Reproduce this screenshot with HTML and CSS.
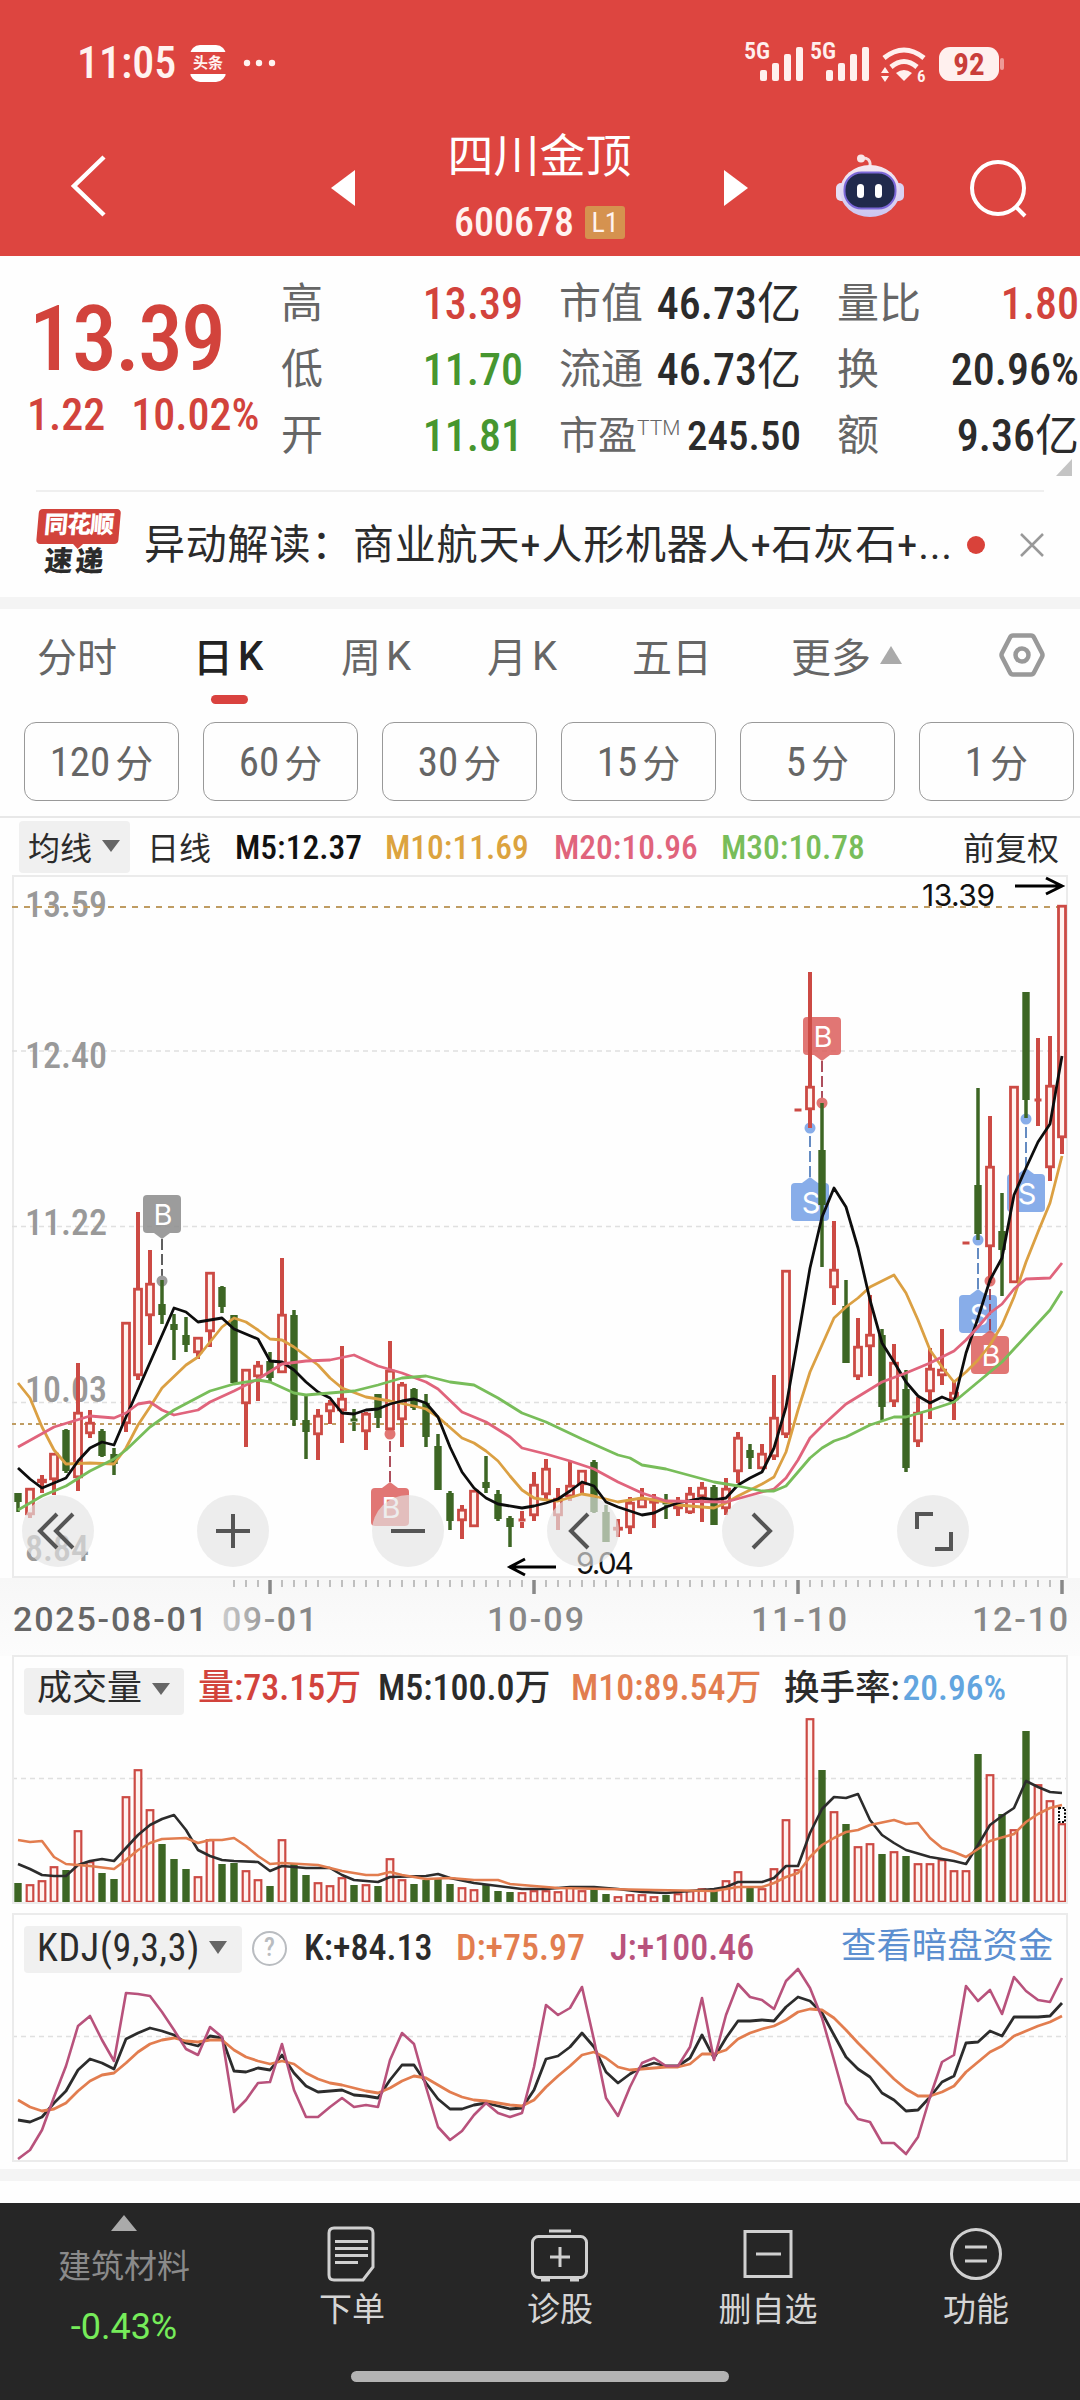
FILE: index.html
```html
<!DOCTYPE html>
<html lang="zh-CN">
<head>
  <meta charset="utf-8">
  <title>四川金顶 600678</title>
  <link rel="stylesheet" href="styles.css">
</head>
<body>
  <header class="header">
    <div class="status">
      <span class="clock">11:05</span>
      <span class="app-badge"><b>头条</b></span>
      <svg class="dots" width="34" height="8"><circle cx="4" cy="4" r="3.2"/><circle cx="16" cy="4" r="3.2"/><circle cx="29" cy="4" r="3.2"/></svg>
      <svg class="signal" width="264" height="44" viewBox="742 40 264 44">
        <text x="744" y="58">5G</text>
        <rect x="760" y="69" width="7" height="11" rx="2"/><rect x="772" y="62" width="7" height="18" rx="2"/><rect x="784" y="53" width="7" height="27" rx="2"/><rect x="796" y="46" width="7" height="34" rx="2"/>
        <text x="810" y="58">5G</text>
        <rect x="826" y="69" width="7" height="11" rx="2"/><rect x="838" y="62" width="7" height="18" rx="2"/><rect x="850" y="53" width="7" height="27" rx="2"/><rect x="862" y="46" width="7" height="34" rx="2"/>
        <path class="wave" d="M884 57Q904 41 924 57M891 66Q904 55 917 66"/>
        <path d="M896 72Q904 66 912 72L904 80ZM881 72l4-6 4 6zM881 75l4 6 4-6z"/>
        <text class="six" x="917" y="81">6</text>
        <rect x="939" y="46" width="60" height="34" rx="11"/><rect x="1000" y="57" width="4" height="12" rx="2" opacity=".5"/>
        <text class="level" x="969" y="74" text-anchor="middle">92</text>
      </svg>
    </div>
    <div class="nav">
      <svg class="back" width="40" height="64" viewBox="0 0 40 64"><path d="M36 3L6 32L36 61"/></svg>
      <svg class="prev" width="24" height="36" viewBox="0 0 24 36"><path d="M24 0v36L0 18z"/></svg>
      <div class="stock">
        <h1>四川金顶</h1>
        <div class="code">600678<span class="level-tag">L1</span></div>
      </div>
      <svg class="next" width="24" height="36" viewBox="0 0 24 36"><path d="M0 0v36l24-18z"/></svg>
      <svg class="robot" width="68" height="64" viewBox="0 0 68 64">
        <defs>
          <linearGradient id="shell" x1="0" y1="0" x2="0" y2="1"><stop offset="0" stop-color="#f6e9f0"/><stop offset="1" stop-color="#cbc6f2"/></linearGradient>
        </defs>
        <path d="M25 4Q35 3 34 12" fill="none" stroke="#f6dde0" stroke-width="3"/><circle cx="25" cy="4.5" r="4" fill="#f8e6e8"/>
        <rect x="0" y="29" width="12" height="18" rx="5" fill="#e5dff5"/><rect x="56" y="29" width="12" height="18" rx="5" fill="#d9d2f2"/>
        <ellipse cx="34" cy="37" rx="30" ry="26" fill="url(#shell)"/>
        <rect x="8.500" y="18.500" width="51" height="36" rx="17" fill="#202a4c" stroke="#7b68d8" stroke-width="2"/>
        <rect x="21" y="30" width="7" height="14" rx="3.500" fill="#fff"/><rect x="39" y="30" width="7" height="14" rx="3.500" fill="#fff"/>
      </svg>
      <svg class="search" width="58" height="60" viewBox="0 0 58 60"><circle cx="28" cy="28" r="26"/><path d="M46 47l9 9"/></svg>
    </div>
  </header>

  <section class="quote">
    <div class="last">
      <div class="price">13.39</div>
      <div class="change"><span>1.22</span><span>10.02%</span></div>
    </div>
    <dl class="facts">
      <div><dt>高</dt><dd class="up">13.39</dd></div>
      <div><dt>低</dt><dd class="down">11.70</dd></div>
      <div><dt>开</dt><dd class="down">11.81</dd></div>
    </dl>
    <dl class="facts">
      <div><dt>市值</dt><dd>46.73<span>亿</span></dd></div>
      <div><dt>流通</dt><dd>46.73<span>亿</span></dd></div>
      <div class="small"><dt>市盈<sup>TTM</sup></dt><dd>245.50</dd></div>
    </dl>
    <dl class="facts">
      <div><dt>量比</dt><dd class="up">1.80</dd></div>
      <div><dt>换</dt><dd>20.96%</dd></div>
      <div><dt>额</dt><dd>9.36<span>亿</span></dd></div>
    </dl>
    <svg class="corner" width="16" height="17"><path d="M16 0v17H0z" fill="#c4c4c4"/></svg>
  </section>

  <section class="news">
    <div class="news-logo"><span class="logo-top">同花顺</span><span class="logo-bottom">速递</span></div>
    <p>异动解读：商业航天+人形机器人+石灰石+...</p>
    <i class="unread"></i>
    <svg class="close" width="24" height="24"><path d="M1 1l22 22M23 1L1 23"/></svg>
  </section>

  <nav class="tabs">
    <a>分时</a>
    <a class="active">日<span>K</span></a>
    <a>周<span>K</span></a>
    <a>月<span>K</span></a>
    <a>五日</a>
    <a class="more">更多<svg width="22" height="18"><path d="M11 0l11 18H0z" fill="#aaa"/></svg></a>
    <svg class="setting" width="46" height="44" viewBox="0 0 46 44"><path d="M14 2.500h18q2 0 3 2l8 15.500q1 2 0 4l-8 15.500q-1 2-3 2H14q-2 0-3-2L3 24q-1-2 0-4l8-15.500q1-2 3-2z"/><circle cx="23" cy="22" r="6.500"/></svg>
  </nav>
  <div class="periods">
    <button>120<span>分</span></button><button>60<span>分</span></button><button>30<span>分</span></button><button>15<span>分</span></button><button>5<span>分</span></button><button>1<span>分</span></button>
  </div>

  <div class="ma-bar">
    <span class="pill">均线<svg width="18" height="12"><path d="M0 0h18L9 12z"/></svg></span>
    <span class="day">日线</span>
    <span class="m5">M5:12.37</span>
    <span class="m10">M10:11.69</span>
    <span class="m20">M20:10.96</span>
    <span class="m30">M30:10.78</span>
    <span class="adjust">前复权</span>
  </div>

  <section class="kline">
    <svg id="candles" width="1080" height="702" viewBox="0 0 1080 702"></svg>
    <div class="controls">
      <button><svg viewBox="0 0 72 72"><path d="M35 19L18 36L35 53M51 19L34 36L51 53"/></svg></button>
      <button><svg viewBox="0 0 72 72"><path d="M36 19v34M19 36h34"/></svg></button>
      <button><svg viewBox="0 0 72 72"><path d="M19 36h34"/></svg></button>
      <button><svg viewBox="0 0 72 72"><path d="M41 19L24 36L41 53"/></svg></button>
      <button><svg viewBox="0 0 72 72"><path d="M31 19L48 36L31 53"/></svg></button>
      <button><svg viewBox="0 0 72 72"><path d="M20 34V19h16M54 37v17H38"/></svg></button>
    </div>
    <svg id="averages" width="1080" height="702" viewBox="0 0 1080 702"></svg>
  </section>
  <svg id="timeline" width="1080" height="78" viewBox="0 0 1080 78"></svg>

  <section class="panel">
    <div class="panel-head vol-head">
      <span class="pill">成交量<svg width="18" height="12"><path d="M0 0h18L9 12z"/></svg></span>
      <span class="up">量:73.15万</span>
      <span>M5:100.0万</span>
      <span class="orange">M10:89.54万</span>
      <span>换手率:<em>20.96%</em></span>
    </div>
    <svg id="volume" width="1080" height="189" viewBox="0 58 1080 189"></svg>
  </section>

  <section class="panel">
    <div class="panel-head kdj-head">
      <span class="pill">KDJ(9,3,3)<svg width="18" height="13"><path d="M0 0h18L9 13z"/></svg></span>
      <i class="help">?</i>
      <span>K:+84.13</span>
      <span class="orange">D:+75.97</span>
      <span class="purple">J:+100.46</span>
      <a>查看暗盘资金</a>
    </div>
    <svg id="kdj" width="1080" height="189" viewBox="0 58 1080 189"></svg>
  </section>
  <div class="gap"></div>

  <footer class="toolbar">
    <div class="sector">
      <svg width="26" height="16"><path d="M13 0l13 16H0z" fill="#aaa"/></svg>
      <span>建筑材料</span>
      <b>-0.43%</b>
    </div>
    <div class="tool">
      <svg width="60" height="60" viewBox="0 0 60 60"><path d="M12 4h34q5 0 5 5v34l-10 13H12q-5 0-5-5V9q0-5 5-5z"/><path d="M13 17.500h33M13 24.500h33M13 31.500h33M13 38.500h23"/></svg>
      <span>下单</span>
    </div>
    <div class="tool">
      <svg width="60" height="60" viewBox="0 0 60 60"><rect x="2.500" y="12.500" width="54" height="41" rx="6"/><path d="M19 7h22M20 33h20M30 23v20M11 56h9M40 56h9"/></svg>
      <span>诊股</span>
    </div>
    <div class="tool">
      <svg width="60" height="60" viewBox="0 0 60 60"><path d="M7 7.500h46v45H7zM18 30h25"/></svg>
      <span>删自选</span>
    </div>
    <div class="tool">
      <svg width="60" height="60" viewBox="0 0 60 60"><circle cx="30" cy="30" r="24.500"/><path d="M19 23h22M19 37h22"/></svg>
      <span>功能</span>
    </div>
    <i class="home"></i>
  </footer>

  <script src="chart.js"></script>
</body>
</html>
```
FILE: styles.css
```css
* {
  box-sizing: border-box;
}

body {
  margin: 0;
  width: 1080px;
  height: 2400px;
  background: #fefefe;
  color: #2b2b2b;
  font-family: "Roboto Condensed", Roboto, "Noto Sans CJK SC", sans-serif;
  overflow: hidden;
}

svg {
  display: block;
  overflow: visible;
}

button {
  padding: 0;
  border: 0;
  font-family: inherit;
}

.up { color: #d2433c; }
.down { color: #46962f; }
.orange { color: #e27d4f; }
.purple { color: #b8527c; }

/* header */
.header {
  height: 256px;
  background: #dd4540;
  color: #fff3f0;
}

.status {
  display: flex;
  align-items: center;
  height: 126px;
  padding: 0 74px 0 77px;
}

.clock {
  width: 113px;
  font-size: 44px;
  font-weight: 500;
}

.app-badge {
  display: flex;
  align-items: center;
  width: 36px;
  height: 37px;
  border-radius: 10px;
  background: #fff;
}

.app-badge b {
  width: 36px;
  background: #dd4540;
  font-size: 15px;
  line-height: 22px;
  text-align: center;
}

.dots {
  margin-left: 17px;
  fill: #fff3f0;
}

.signal {
  margin-left: auto;
  fill: #fff0ee;
  font-size: 24px;
  font-weight: 600;
}

.signal .wave {
  fill: none;
  stroke: #fff0ee;
  stroke-width: 5;
}

.signal .six { font-size: 17px; }
.signal .level { fill: #c93e3a; font-size: 31px; font-weight: 700; }

.nav {
  display: flex;
  align-items: flex-start;
  height: 130px;
  padding-left: 68px;
  fill: #fff;
}

.back {
  margin-top: 28px;
  fill: none;
  stroke: #fff;
  stroke-width: 4.5;
}

.prev { margin: 44px 0 0 223px; }
.next { margin-top: 44px; }

.stock {
  width: 369px;
  text-align: center;
}

.stock h1 {
  margin: 0;
  font-size: 46px;
  font-weight: 400;
  line-height: 60px;
  color: #fff;
}

.code {
  display: flex;
  justify-content: center;
  align-items: center;
  gap: 11px;
  height: 72px;
  font-size: 40px;
  font-weight: 500;
}

.level-tag {
  width: 40px;
  background: #d5924f;
  border-radius: 3px;
  font-size: 28px;
  font-weight: 400;
  line-height: 33px;
}

.robot { margin: 28px 0 0 88px; }

.search {
  margin: 34px 0 0 66px;
  fill: none;
  stroke: #fff;
  stroke-width: 4;
}

/* quote */
.quote {
  position: relative;
  display: flex;
  height: 234px;
  padding-top: 15px;
}

.last {
  flex: none;
  width: 281px;
  padding-top: 19px;
  color: #d2433c;
}

.price {
  padding-left: 29px;
  font-size: 90px;
  font-weight: 500;
  line-height: 100px;
  letter-spacing: -2px;
}

.change {
  display: flex;
  gap: 26px;
  padding-left: 27px;
  font-size: 44px;
  font-weight: 500;
  line-height: 50px;
}

.facts {
  flex: none;
  width: 242px;
  margin: 0 36px 0 0;
}

.facts div {
  display: flex;
  justify-content: space-between;
  align-items: center;
  height: 66px;
  font-size: 44px;
  white-space: nowrap;
}

.facts dt {
  color: #666;
  font-size: 42px;
  line-height: 60px;
}

.facts dd {
  margin: 0;
  font-weight: 500;
  line-height: 54px;
}

.facts dd span { font-weight: 400; }
.facts .small { font-size: 41px; }
.facts .small dt { font-size: 39px; }

.facts sup {
  display: inline-block;
  font-family: Roboto, sans-serif;
  font-size: 21px;
  font-weight: 300;
  line-height: 20px;
}

.corner {
  position: absolute;
  right: 8px;
  bottom: 14px;
}

.news {
  display: flex;
  align-items: center;
  height: 107px;
  margin-left: 36px;
  margin-right: 36px;
  border-top: 2px solid #efefef;
}

.news-logo {
  display: flex;
  flex-direction: column;
  width: 82px;
  transform: skewX(-5deg);
  text-align: center;
  font-weight: 900;
}

.logo-top {
  position: relative;
  height: 35px;
  border-radius: 4px;
  background: #d2433c;
  color: #fff;
  font-size: 24px;
  line-height: 33px;
  letter-spacing: -1px;
}

.logo-top::after {
  content: "";
  position: absolute;
  left: 37px;
  top: 35px;
  border: 5px solid transparent;
  border-top-color: #d2433c;
}

.logo-bottom {
  font-size: 28px;
  line-height: 36px;
  letter-spacing: 3px;
}

.news p {
  margin: 0 0 0 26px;
  padding-bottom: 7px;
  width: 823px;
  font-size: 41px;
  letter-spacing: 0.8px;
  white-space: nowrap;
}

.unread {
  width: 18px;
  height: 18px;
  border-radius: 50%;
  background: #d9423a;
}

.close {
  margin-left: 35px;
  stroke: #999;
  stroke-width: 2.5;
}

/* tabs */
.tabs {
  display: grid;
  grid-template-columns: 156px 148px 146px 145px 159px 208px 46px;
  align-items: center;
  height: 125px;
  padding: 0 0 21px 37px;
  border-top: 12px solid #f4f4f4;
  color: #666;
  font-size: 40px;
}

.tabs a {
  position: relative;
  display: flex;
  align-items: center;
}

.tabs span {
  margin-left: 5px;
  padding-top: 2px;
  font-family: Roboto, sans-serif;
}

.tabs .active {
  color: #222;
  font-weight: 500;
}

.tabs .active::after {
  content: "";
  position: absolute;
  left: 18px;
  top: 69px;
  width: 37px;
  height: 9px;
  border-radius: 5px;
  background: #d9423f;
}

.more { gap: 9px; }

.setting {
  fill: none;
  stroke: #999;
  stroke-width: 4.5;
}

.periods {
  display: flex;
  gap: 24px;
  height: 96px;
  padding-left: 24px;
  border-bottom: 2px solid #e8e8e8;
}

.periods button {
  flex: none;
  display: flex;
  justify-content: center;
  align-items: center;
  gap: 5px;
  width: 155px;
  height: 79px;
  border: 1.5px solid #999;
  border-radius: 12px;
  background: #fefefe;
  color: #666;
  font-size: 41px;
}

.periods span {
  padding-bottom: 2px;
  font-size: 38px;
}

.ma-bar {
  display: grid;
  grid-template-columns: 128px 88px 150px 169px 167px 242px auto;
  align-items: center;
  height: 58px;
  padding-left: 19px;
  font-size: 33.5px;
  font-weight: 500;
}

.pill {
  display: flex;
  align-items: center;
  gap: 10px;
  background: #f0f0f0;
  border-radius: 4px;
  fill: #666;
  font-weight: 400;
}

.ma-bar .pill {
  width: 111px;
  height: 52px;
  padding-left: 9px;
  padding-bottom: 3px;
  font-size: 32px;
}

.day,
.adjust {
  padding-bottom: 3px;
  font-size: 32px;
  font-weight: 400;
}

.m5 { color: #111; }
.m10 { color: #dca33f; }
.m20 { color: #e0647c; }
.m30 { color: #78bd5a; }

/* charts */
.kline {
  position: relative;
  height: 702px;
}

#averages {
  position: absolute;
  left: 0;
  top: 0;
}

.controls {
  position: absolute;
  left: 22px;
  top: 619px;
  display: flex;
  gap: 103px;
}

.controls button {
  width: 72px;
  height: 72px;
  border-radius: 50%;
  background: rgba(228, 228, 228, 0.66);
}

.controls path {
  fill: none;
  stroke: #555;
  stroke-width: 4;
}

.frame { fill: none; stroke: #ebebeb; stroke-width: 2; }
.grid { stroke: #e0e0e0; stroke-width: 1.5; stroke-dasharray: 5 4; }
.limit { stroke: #bf9c62; stroke-width: 2; stroke-dasharray: 6 6; }
.limit.close-line { stroke-dasharray: 4 4; }
.axis { fill: #999; font-size: 36px; font-weight: 500; }
.extreme { fill: #111; font-family: Inter, sans-serif; font-size: 30px; }
.arrow { fill: none; stroke: #000; stroke-width: 3; }
.marker-text { fill: #fff; font-family: Inter, sans-serif; font-size: 29px; text-anchor: middle; }
.rise { fill: #fff3f0; stroke: #cc4a44; stroke-width: 2.8; }
.rise-wick { stroke: #cc4a44; stroke-width: 4; }
.fall { fill: #3d6624; stroke: none; }
.fall-wick { stroke: #3d6624; stroke-width: 3.5; }
.line { fill: none; stroke-width: 2.6; stroke-linejoin: round; }
.tick { stroke: #999; stroke-width: 1.2; }
.tick.major { stroke: #888; stroke-width: 3.5; }
.date { fill: #888; font-family: Roboto, sans-serif; font-size: 34px; font-weight: 500; }

#timeline {
  background: linear-gradient(#f7f7f7, #fcfcfc);
}

.panel {
  height: 247px;
  margin-bottom: 11px;
  outline: 2px solid #ebebeb;
  outline-offset: -1px;
  clip-path: inset(-2px 12px -2px 12px);
  position: relative;
}

/* side borders sit inside the 1080px canvas */
.panel::after {
  content: "";
  position: absolute;
  left: 12px;
  right: 12px;
  top: 0;
  bottom: 0;
  border-left: 2px solid #ebebeb;
  border-right: 2px solid #ebebeb;
}

.panel-head {
  display: grid;
  grid-template-rows: 46px;
  align-items: center;
  height: 58px;
  padding-top: 12px;
  padding-left: 24px;
  white-space: nowrap;
  font-size: 36px;
  font-weight: 500;
  line-height: 40px;
}

.panel-head span,
.panel-head a {
  padding-bottom: 6px;
}

.panel-head .pill {
  width: 160px;
  height: 47px;
  padding-left: 13px;
  padding-bottom: 4px;
  font-size: 35px;
}

.vol-head { grid-template-columns: 174px 180px 193px 213px auto; }
.vol-head em { color: #62a5df; font-style: normal; margin-left: 3px; }
.vol-head span:last-child { font-size: 35.5px; }
.kdj-head { grid-template-columns: 228px 52px 152px 154px 229px auto; }
.kdj-head span { padding-bottom: 3px; }

.kdj-head .pill {
  width: 218px;
  padding-bottom: 3px;
  font-size: 38px;
  letter-spacing: 0.7px;
  gap: 9px;
}

.help {
  width: 35px;
  height: 35px;
  margin-bottom: 2px;
  border: 2.5px solid #b9bcc0;
  border-radius: 50%;
  color: #b9bcc0;
  font-size: 25px;
  font-style: normal;
  line-height: 30px;
  text-align: center;
}

.kdj-head a {
  margin-left: 2px;
  color: #5c8fd0;
  font-size: 35.4px;
  font-weight: 400;
}

.gap {
  height: 12px;
  margin-top: -3px;
  background: #f4f4f4;
}

/* bottom toolbar */
.toolbar {
  position: relative;
  display: flex;
  height: 197px;
  margin-top: 22px;
  background: #262626;
  color: #d5d5d5;
  font-size: 33px;
}

.sector {
  display: flex;
  flex-direction: column;
  align-items: center;
  width: 248px;
  padding-top: 12px;
  color: #8a8a8a;
}

.sector span {
  margin-top: 12px;
  line-height: 48px;
}

.sector b {
  margin-top: 16px;
  color: #76ec5a;
  font-family: Roboto, sans-serif;
  font-size: 36px;
  font-weight: 400;
  line-height: 40px;
}

.tool {
  display: flex;
  flex-direction: column;
  align-items: center;
  width: 208px;
  padding-top: 21px;
}

.tool svg {
  fill: none;
  stroke: #d0d0d0;
  stroke-width: 3;
}

.tool span {
  line-height: 51px;
}

.home {
  position: absolute;
  left: 351px;
  bottom: 18px;
  width: 378px;
  height: 11px;
  border-radius: 6px;
  background: #b3b3b3;
}
```
FILE: chart.js
```js
// one entry per trading day: direction, high, body top, body bottom, low
var days = `g617,617,626,636 r612,612,639,642 r599,603,607,617 r577,577,604,619 g553,554,595,597 r487,536,602,615 r534,546,558,562 g553,555,580,581
g572,578,588,599 r446,446,548,556 r336,412,500,504 r374,407,440,469 g404,428,439,448 g438,448,454,484 g441,459,469,476 r461,461,477,483
r396,396,456,471 g410,411,431,437 g439,439,507,507 r493,493,528,571 r485,489,501,525 g476,485,502,506 r382,438,497,497 g434,439,544,550
g518,544,556,583 r533,539,559,584 r524,527,536,548 r470,522,535,567 g533,544,546,555 r536,537,556,574 g518,518,542,552 r465,494,554,554
r506,508,544,571 g512,513,532,534 g518,527,561,571 g558,570,614,614 g615,617,645,654 r629,633,645,663 r614,614,651,651 g580,606,612,617
g614,618,643,645 g640,642,651,671 r635,644,646,652 r596,608,640,645 r583,592,619,624 r612,622,640,654 r585,609,621,625 r594,594,609,617
g584,586,636,637 g629,636,666,666 r643,651,654,661 r621,626,652,658 r612,622,632,632 r618,624,627,652 g618,627,629,643 r621,629,633,640
r611,617,637,638 r606,611,621,646 g609,611,649,649 r602,612,633,639 r556,561,596,607 g568,574,582,593 r568,577,593,593 r499,541,581,584
r394,394,559,562 r234,234,234,234 r96,210,234,252 g227,274,329,391 r345,393,412,429 g404,430,487,487 r442,470,501,504 r419,458,471,500
g453,459,531,544 r468,486,526,531 g494,513,592,596 r521,536,566,571 r472,492,516,543 r453,493,500,509 r504,516,524,544 r367,367,367,367
g212,309,358,364 r240,290,371,407 g317,355,374,420 r210,210,407,407 g116,116,224,242 r162,224,224,250 r160,209,292,305 r29,29,262,278`.split(/\s+/).map(function (s) {
  return { up: s[0] === 'r', v: s.slice(1).split(',').map(Number) };
});

var volumes = [20,19,23,37,33,73,42,30,24,107,134,94,59,44,34,27,64,39,40,33,24,17,64,39,28,21,18,26,18,19,17,45,24,19,23,24,19,16,14,18,12,11,11,13,
  13,12,17,13,14,9,7,9,9,7,8,10,13,15,14,23,32,15,15,35,84,34,185,133,92,79,57,60,49,52,47,40,40,44,33,33,149,129,89,74,172,119,103,80];

// lines are written as "day:y", days left out lie on the straight line between
var ma5 = '0:592 1:603 2:612 3:607 4:602 5:585 6:572 7:566 8:569 9:541 13:432 14:436 15:446 17:442 18:453 20:463 21:485 22:486 23:494 24:506 25:516 26:522 27:537 28:538 29:534 30:533 31:528 32:525 33:523 34:527 35:541 36:571 37:596 38:612 39:622 40:628 42:632 43:630 44:627 45:623 46:615 47:606 48:610 49:626 50:631 52:639 53:637 54:631 55:627 57:622 58:624 59:622 60:609 61:602 62:596 63:572 64:531 65:462 66:392 67:341 68:312 69:331 70:372 71:424 72:467 73:486 74:506 75:520 76:527 77:521 78:526 79:477 80:442 81:404 82:382 83:319 84:292 85:266 86:248 87:180';
var ma10 = '0:507 1:522 2:551 3:574 4:588 6:587 8:588 9:572 10:549 11:531 12:512 14:489 15:481 17:451 18:442 19:446 20:454 21:463 22:464 23:471 25:489 26:502 27:512 29:521 31:525 33:530 34:533 35:541 37:562 38:567 39:575 40:585 41:600 42:614 43:622 44:624 45:625 47:618 48:620 50:626 52:622 54:626 55:629 58:632 59:627 60:620 62:608 63:601 64:576 65:534 66:496 68:442 69:431 70:422 71:411 73:399 74:417 75:444 76:474 77:491 78:506 79:496 80:484 81:469 82:449 83:421 84:386 85:356 86:327 87:280';
var ma20 = '0:571 3:551 6:540 8:542 9:537 10:528 11:526 12:534 13:539 15:534 16:526 18:515 20:503 22:488 24:485 26:484 28:479 30:490 32:497 34:506 35:513 37:536 39:546 41:561 42:572 44:578 46:585 48:593 50:606 52:617 54:625 59:626 62:616 63:613 64:602 65:584 66:562 67:550 69:528 72:506 74:497 76:487 78:475 79:464 80:451 81:437 82:428 83:413 84:403 86:402 87:387';
var ma30 = '0:634 2:620 4:610 6:595 8:583 9:574 11:551 13:534 16:515 18:508 20:504 21:506 23:517 24:519 28:515 30:509 32:502 34:500 36:506 38:509 40:522 42:537 44:546 47:563 50:579 51:582 52:589 54:593 58:606 60:610 62:615 63:615 64:610 66:582 67:572 68:565 69:561 71:549 73:541 74:541 76:534 78:526 80:506 82:486 84:460 86:434 87:415';

var vol5 = '0:208 1:213 2:219 3:220 4:220 5:209 6:205 7:203 8:205 9:192 10:179 11:169 12:163 13:159 14:174 15:194 16:200 17:204 18:205 20:206 21:215 22:210 24:212 26:212 27:219 28:224 30:226 31:221 34:220 35:218 36:222 38:227 40:230 42:233 44:233 46:231 48:231 50:233 52:236 54:237 56:235 58:233 59:231 60:226 62:226 63:222 64:210 65:210 66:177 67:153 68:141 69:142 70:138 71:164 72:179 73:187 74:194 76:201 78:205 79:208 80:189 81:169 82:160 83:152 84:125 85:131 86:136 87:137';
var vol10 = '0:184 1:186 2:185 3:201 4:208 6:210 8:213 9:204 10:194 11:187 12:183 14:182 15:187 16:184 17:184 18:182 19:190 20:200 21:208 22:207 25:209 27:215 29:219 30:219 31:216 32:219 34:223 36:222 38:224 40:224 41:228 43:230 45:232 49:233 53:234 58:235 60:231 62:231 63:227 64:221 65:217 66:201 67:189 68:182 69:176 70:174 71:169 73:164 74:168 75:167 76:182 77:192 78:196 79:201 81:185 83:178 84:166 85:158 86:152 87:149';

var kLine = [206,208,203,189,177,156,145,149,155,125,119,114,117,121,129,132,122,124,157,158,154,156,141,159,172,178,177,176,181,182,184,166,151,151,169,185,195,195,191,189,192,195,194,176,145,142,133,119,133,158,169,160,153,149,152,152,144,121,144,124,107,107,106,107,93,83,87,99,121,143,155,163,179,186,197,196,183,168,162,129,128,117,122,103,103,103,102,89];
var dLine = [186,193,197,195,189,177,167,161,159,149,138,130,126,124,127,128,126,126,136,143,147,150,147,150,159,165,169,171,174,177,179,174,167,162,164,171,178,183,186,187,189,191,192,186,173,162,152,141,138,144,153,156,155,154,153,153,150,140,140,136,125,119,115,112,106,98,95,96,104,116,129,141,153,165,175,182,182,178,172,158,148,138,132,122,117,112,108,102];
var jLine = [245,236,216,183,152,112,102,126,147,79,80,82,98,116,135,141,113,123,198,186,169,168,130,176,203,203,193,184,193,191,193,146,119,130,173,213,226,217,201,189,199,203,199,153,91,101,94,73,126,184,202,173,149,144,152,152,133,84,146,101,70,83,86,95,67,55,74,104,146,189,205,208,229,229,240,223,183,148,141,72,87,76,100,63,77,86,88,64];

function x(i) {
  return 18 + 12 * i;
}

function polyline(points, color, width) {
  return '<polyline class="line" points="' + points.join(' ') + '" style="stroke:' + color + ';stroke-width:' + (width || 2.8) + '"/>';
}

function fromDays(text) {
  return text.split(' ').map(function (p) {
    p = p.split(':');
    return x(+p[0]) + ',' + p[1];
  });
}

function fromList(list) {
  return list.map(function (y, i) { return x(i) + ',' + y; });
}

function hline(y, cls) {
  return '<line class="' + cls + '" x1="12" x2="1067" y1="' + y + '" y2="' + y + '"/>';
}

function vline(cx, y1, y2, cls) {
  return '<line class="' + cls + '" x1="' + cx + '" x2="' + cx + '" y1="' + y1 + '" y2="' + y2 + '"/>';
}

// buy / sell flag: box top, dot position
function marker(day, letter, top, dot, color, stem) {
  var cx = x(day), below = dot > top;
  var edge = below ? top + 38 : top;
  var tip = below ? edge + 6 : edge - 6;
  return '<g opacity=".85"><rect x="' + (cx - 19) + '" y="' + top + '" width="38" height="38" rx="4" fill="' + color + '"/>' +
    '<path d="M' + (cx - 8) + ' ' + edge + 'L' + cx + ' ' + tip + 'L' + (cx + 8) + ' ' + edge + 'z" fill="' + color + '"/>' +
    '<line x1="' + cx + '" x2="' + cx + '" y1="' + tip + '" y2="' + dot + '" stroke="' + stem + '" stroke-width="2" stroke-dasharray="11 4"/>' +
    '<circle cx="' + cx + '" cy="' + dot + '" r="5.500" fill="' + color + '"/></g>' +
    '<text class="marker-text" x="' + (cx + 1) + '" y="' + (top + 30) + '">' + letter + '</text>';
}

function drawCandles() {
  var s = '<rect class="frame" x="13" y="0" width="1054" height="701"/>';
  s += hline(175, 'grid') + hline(350.5, 'grid') + hline(526.5, 'grid');
  [['13.59', 41], ['12.40', 192], ['11.22', 359], ['10.03', 526], ['8.84', 685]].forEach(function (a) {
    s += '<text class="axis" x="25" y="' + a[1] + '">' + a[0] + '</text>';
  });
  s += hline(31, 'limit') + hline(548, 'limit close-line');
  s += marker(12, 'B', 319, 405, '#8c8c8c', '#444');
  s += marker(67, 'B', 141, 227, '#dc5f5c', '#a03040');
  s += marker(66, 'S', 307, 252, '#74a0e6', '#4a78b8');
  s += marker(84, 'S', 298, 243, '#74a0e6', '#4a78b8');
  s += marker(80, 'S', 419, 364, '#74a0e6', '#4a78b8');
  s += marker(81, 'B', 460, 405, '#dc5f5c', '#a03040');
  s += marker(31, 'B', 612, 558, '#dc5f5c', '#a03040');
  days.forEach(function (d, i) {
    var cx = x(i), v = d.v, kind = d.up ? 'rise' : 'fall';
    if (v[0] < v[1]) s += vline(cx, v[0], v[1], kind + '-wick');
    if (v[3] > v[2]) s += vline(cx, v[2], v[3], kind + '-wick');
    if (v[2] - v[1] < 3) {
      s += '<rect x="' + (cx - 3.5) + '" y="' + (v[1] - 1.5) + '" width="7" height="3" fill="' + (d.up ? '#cc4a44' : '#3d6624') + '"/>';
    } else if (d.up) {
      s += '<rect class="rise" x="' + (cx - 3.5) + '" y="' + (v[1] + 1.2) + '" width="7" height="' + Math.max(v[2] - v[1] - 2.4, 1) + '"/>';
    } else {
      s += '<rect class="fall" x="' + (cx - 3.7) + '" y="' + v[1] + '" width="7.400" height="' + (v[2] - v[1]) + '"/>';
    }
  });
  s += '<text class="extreme" x="922" y="30" textLength="73">13.39</text><path class="arrow" d="M1015 10h47M1046 2l16 8-16 8"/>';
  s += '<text class="extreme" x="576" y="698" textLength="58">9.04</text><path class="arrow" d="M556 691h-46M525 683l-15 8 15 8"/>';
  document.getElementById('candles').innerHTML = s;
  document.getElementById('averages').innerHTML =
    polyline(fromDays(ma10), '#dba043') + polyline(fromDays(ma5), '#0d0d0d') +
    polyline(fromDays(ma20), '#e0647c') + polyline(fromDays(ma30), '#78bd5a');
}

function drawTimeline() {
  var s = '';
  for (var i = 18; i < 88; i++) {
    var major = (i - 21) % 22 === 0;
    s += vline(x(i), 2, major ? 16 : 9, major ? 'tick major' : 'tick');
  }
  s += '<text class="date" x="13" y="53" textLength="194" style="fill:#666">2025-08-01</text>';
  s += '<linearGradient id="fade" x1="0" x2="1"><stop offset="0" stop-color="#ccc"/><stop offset=".6" stop-color="#888"/></linearGradient>';
  s += '<text class="date" x="222" y="53" textLength="95" style="fill:url(#fade)">09-01</text>';
  s += '<text class="date" x="487" y="53" textLength="97">10-09</text>';
  s += '<text class="date" x="751" y="53" textLength="96">11-10</text>';
  s += '<text class="date" x="972" y="53" textLength="96">12-10</text>';
  document.getElementById('timeline').innerHTML = s;
}

function drawVolume() {
  var s = hline(122.5, 'grid');
  volumes.forEach(function (h, i) {
    if (days[i].up) {
      s += '<rect class="rise" x="' + (x(i) - 3.3) + '" y="' + (248.2 - h) + '" width="6.600" height="' + (h - 2.4) + '" style="stroke-width:2.2"/>';
    } else {
      s += '<rect class="fall" x="' + (x(i) - 3.7) + '" y="' + (247 - h) + '" width="7.400" height="' + h + '"/>';
    }
  });
  // estimated volume for the running day
  s += '<rect x="1059" y="152" width="6" height="14" fill="#fff" stroke="#000" stroke-width="2" stroke-dasharray="2 1.500"/>';
  s += polyline(fromDays(vol5), '#2c2c2c', 2.6) + polyline(fromDays(vol10), '#e27d4f', 2.6);
  document.getElementById('volume').innerHTML = s;
}

function drawKdj() {
  document.getElementById('kdj').innerHTML = hline(122.5, 'grid') +
    polyline(fromList(kLine), '#2c2c2c') + polyline(fromList(dLine), '#e27d4f') + polyline(fromList(jLine), '#b8527c', 2.6);
}

drawCandles();
drawTimeline();
drawVolume();
drawKdj();
```
